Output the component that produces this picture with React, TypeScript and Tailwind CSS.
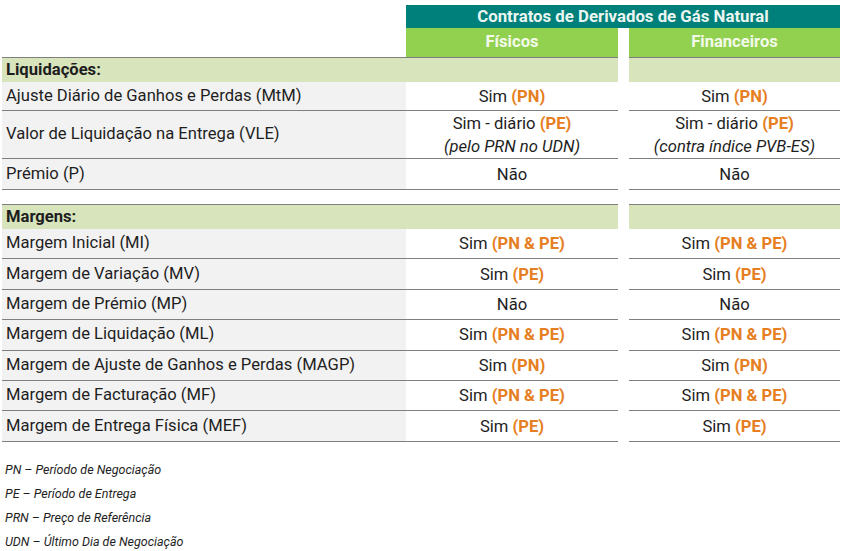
import React from "react";

const ORANGE = "text-[#e67e22]";

type Val = { pre: string; tag?: string; sub?: string };

const Cell = ({ v }: { v: Val }) => (
  <div className="flex flex-col items-center justify-center border-b border-[#7f7f7f] bg-white">
    <div className="leading-[23px]">
      {v.pre}
      {v.tag && <span className={`font-bold ${ORANGE}`}> {v.tag}</span>}
    </div>
    {v.sub && <div className="italic leading-[23px]">{v.sub}</div>}
  </div>
);

const Row = ({ label, a, b, h }: { label: string; a: Val; b: Val; h: string }) => (
  <div className={`grid grid-cols-[404px_212px_11px_211px] ${h}`}>
    <div className="flex items-center border-b border-[#7f7f7f] bg-[#f2f2f2] pl-[4px]">{label}</div>
    <Cell v={a} />
    <div />
    <Cell v={b} />
  </div>
);

const Section = ({ label }: { label: string }) => (
  <div className="grid grid-cols-[404px_212px_11px_211px] h-[25px]">
    <div className="col-span-2 flex items-center border-y border-[#7f7f7f] bg-[#d8e4bc] pl-[4px] font-bold">{label}</div>
    <div />
    <div className="border-y border-[#7f7f7f] bg-[#d8e4bc]" />
  </div>
);

export default function App() {
  const rh = "h-[30.4px]";
  return (
    <div
      className="w-[842px] h-[551px] bg-white text-[#1e1e1e] text-[16.6px]"
      style={{ fontFamily: "Roboto, 'Liberation Sans', sans-serif" }}
    >
      <div className="ml-[2px] pt-[5px]">
        <div className="grid grid-cols-[404px_212px_11px_211px]">
          <div />
          <div className="col-span-3 h-[23px] bg-[#00807a] flex items-center justify-center font-bold text-[16.8px] text-[#eaf6f2]">
            Contratos de Derivados de Gás Natural
          </div>
        </div>
        <div className="grid grid-cols-[404px_212px_11px_211px] h-[29px]">
          <div />
          <div className="bg-[#92d050] flex items-center justify-center font-bold text-[#f2faea]">Físicos</div>
          <div />
          <div className="bg-[#92d050] flex items-center justify-center font-bold text-[#f2faea]">Financeiros</div>
        </div>
        <Section label="Liquidações:" />
        <Row h="h-[29px]" label="Ajuste Diário de Ganhos e Perdas (MtM)" a={{ pre: "Sim", tag: "(PN)" }} b={{ pre: "Sim", tag: "(PN)" }} />
        <Row
          h="h-[48px]"
          label="Valor de Liquidação na Entrega (VLE)"
          a={{ pre: "Sim - diário", tag: "(PE)", sub: "(pelo PRN no UDN)" }}
          b={{ pre: "Sim - diário", tag: "(PE)", sub: "(contra índice PVB-ES)" }}
        />
        <Row h="h-[31px]" label="Prémio (P)" a={{ pre: "Não" }} b={{ pre: "Não" }} />
        <div className="h-[14px]" />
        <Section label="Margens:" />
        <Row h={rh} label="Margem Inicial (MI)" a={{ pre: "Sim", tag: "(PN & PE)" }} b={{ pre: "Sim", tag: "(PN & PE)" }} />
        <Row h={rh} label="Margem de Variação (MV)" a={{ pre: "Sim", tag: "(PE)" }} b={{ pre: "Sim", tag: "(PE)" }} />
        <Row h={rh} label="Margem de Prémio (MP)" a={{ pre: "Não" }} b={{ pre: "Não" }} />
        <Row h={rh} label="Margem de Liquidação (ML)" a={{ pre: "Sim", tag: "(PN & PE)" }} b={{ pre: "Sim", tag: "(PN & PE)" }} />
        <Row h={rh} label="Margem de Ajuste de Ganhos e Perdas (MAGP)" a={{ pre: "Sim", tag: "(PN)" }} b={{ pre: "Sim", tag: "(PN)" }} />
        <Row h={rh} label="Margem de Facturação (MF)" a={{ pre: "Sim", tag: "(PN & PE)" }} b={{ pre: "Sim", tag: "(PN & PE)" }} />
        <Row h={rh} label="Margem de Entrega Física (MEF)" a={{ pre: "Sim", tag: "(PE)" }} b={{ pre: "Sim", tag: "(PE)" }} />
        <div className="mt-[16px] pl-[3px] italic text-[12.5px] leading-[24px]">
          <div>PN – Período de Negociação</div>
          <div>PE – Período de Entrega</div>
          <div>PRN – Preço de Referência</div>
          <div>UDN – Último Dia de Negociação</div>
        </div>
      </div>
    </div>
  );
}
